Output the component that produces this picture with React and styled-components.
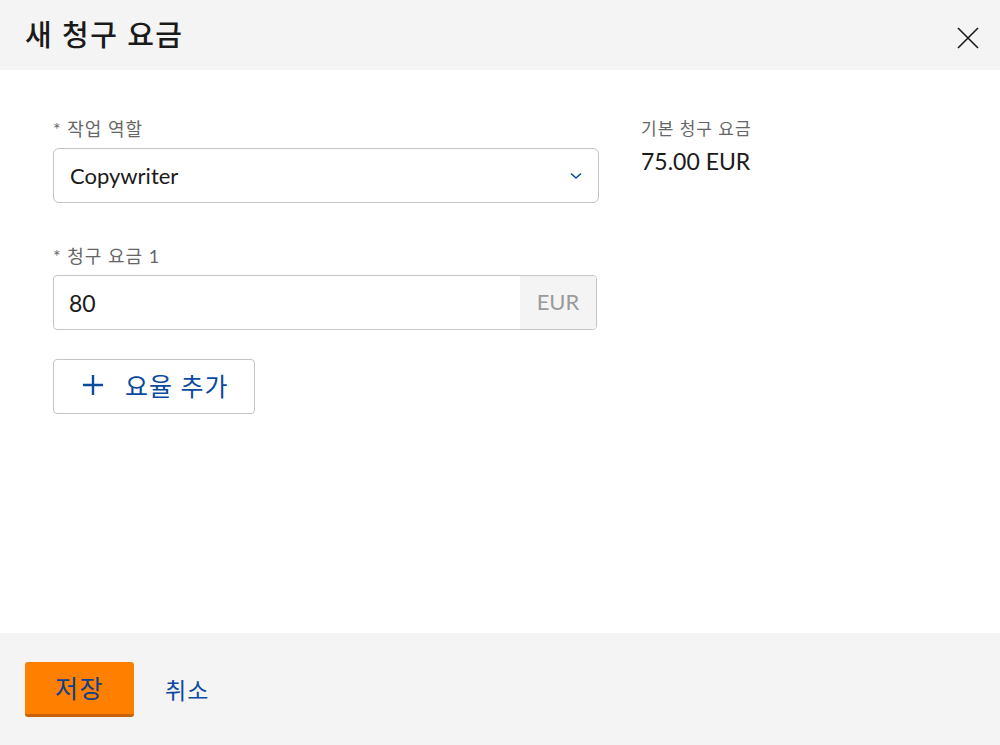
import React from "react";
import styled, { createGlobalStyle } from "styled-components";

const Global = createGlobalStyle`
  html, body { margin: 0; padding: 0; background: #fff; }
  body {
    font-family: Lato, "Noto Sans CJK KR", sans-serif;
    color: #1a1a1a;
  }
  * { box-sizing: border-box; }
`;

const Dialog = styled.div`
  width: 1000px;
  height: 745px;
  display: flex;
  flex-direction: column;
`;

const Header = styled.header`
  height: 70px;
  background: #f4f4f4;
  display: flex;
  align-items: center;
  justify-content: space-between;
  padding: 0 20px 0 25px;
`;

const Title = styled.h1`
  margin: 0 0 4px 0;
  font-size: 29px;
  font-weight: 500;
  color: #1a1a1a;
  letter-spacing: 1.5px;
`;

const CloseButton = styled.button`
  border: 0;
  background: none;
  padding: 0;
  width: 24px;
  height: 24px;
  display: flex;
  align-items: center;
  justify-content: center;
  cursor: pointer;
  margin-top: 6px;
`;

const Body = styled.main`
  flex: 1;
  background: #fff;
  display: flex;
  gap: 42px;
  padding: 48px 53px 0 53px;
`;

const FormColumn = styled.div`
  width: 546px;
  display: flex;
  flex-direction: column;
`;

const Field = styled.div`
  display: flex;
  flex-direction: column;
  margin-bottom: ${(p) => p.$mb || 0}px;
`;

const Label = styled.label`
  font-size: 18px;
  letter-spacing: 1px;
  color: #666;
  line-height: 22px;
  margin-bottom: 8px;
`;

const Select = styled.div`
  height: 55px;
  border: 1px solid #c4c4c4;
  border-radius: 6px;
  display: flex;
  align-items: center;
  justify-content: space-between;
  padding: 0 16px 0 16px;
  font-size: 22px;
  color: #1a1a1a;
`;

const InputGroup = styled.div`
  width: 544px;
  height: 55px;
  border: 1px solid #c4c4c4;
  border-radius: 4px;
  display: flex;
  overflow: hidden;
`;

const Input = styled.div`
  flex: 1;
  display: flex;
  align-items: center;
  padding-left: 15px;
  font-size: 23px;
`;

const Addon = styled.div`
  width: 76px;
  background: #f4f4f4;
  color: #9a9a9a;
  font-size: 22px;
  display: flex;
  align-items: center;
  justify-content: center;
  padding-bottom: 3px;
`;

const AddButton = styled.button`
  width: 202px;
  height: 55px;
  border: 1px solid #c4c4c4;
  border-radius: 4px;
  background: #fff;
  color: #0b4a9e;
  font-family: inherit;
  font-size: 25px;
  letter-spacing: 1px;
  display: flex;
  align-items: center;
  gap: 21px;
  padding: 0 0 3px 28px;
  cursor: pointer;
`;

const Info = styled.div`
  display: flex;
  flex-direction: column;
`;

const InfoLabel = styled.div`
  font-size: 17px;
  letter-spacing: 1px;
  color: #666;
  line-height: 22px;
`;

const InfoValue = styled.div`
  font-size: 23px;
  line-height: 26px;
  margin-top: 8px;
`;

const Footer = styled.footer`
  height: 112px;
  background: #f4f4f4;
  display: flex;
  align-items: flex-start;
  padding: 29px 25px 0 25px;
  gap: 31px;
`;

const SaveButton = styled.button`
  width: 109px;
  height: 55px;
  border: 0;
  border-bottom: 3px solid #c9620a;
  border-radius: 3px;
  background: #ff8000;
  color: #0b3f8f;
  font-family: inherit;
  font-size: 25px;
  letter-spacing: 1.5px;
  padding: 0 0 2px 0;
  cursor: pointer;
`;

const LinkButton = styled.button`
  border: 0;
  background: none;
  color: #0b4a9e;
  font-family: inherit;
  font-size: 23px;
  letter-spacing: 1px;
  height: 55px;
  padding: 0 0 2px 0;
  cursor: pointer;
`;

export default function App() {
  return (
    <Dialog>
      <Global />
      <Header>
        <Title>새 청구 요금</Title>
        <CloseButton aria-label="닫기">
          <svg width="22" height="22" viewBox="0 0 22 22">
            <path d="M1 1 L21 21 M21 1 L1 21" stroke="#1a1a1a" strokeWidth="1.6" />
          </svg>
        </CloseButton>
      </Header>
      <Body>
        <FormColumn>
          <Field $mb={42}>
            <Label>* 작업 역할</Label>
            <Select>
              <span>Copywriter</span>
              <svg width="12" height="8" viewBox="0 0 12 8">
                <path d="M1 1.5 L6 6 L11 1.5" fill="none" stroke="#0b4a9e" strokeWidth="1.6" />
              </svg>
            </Select>
          </Field>
          <Field $mb={29}>
            <Label>* 청구 요금 1</Label>
            <InputGroup>
              <Input>80</Input>
              <Addon>EUR</Addon>
            </InputGroup>
          </Field>
          <AddButton>
            <svg width="22" height="22" viewBox="0 0 22 22">
              <path d="M11 1 V21 M1 11 H21" stroke="#0b4a9e" strokeWidth="2.4" />
            </svg>
            <span>요율 추가</span>
          </AddButton>
        </FormColumn>
        <Info>
          <InfoLabel>기본 청구 요금</InfoLabel>
          <InfoValue>75.00 EUR</InfoValue>
        </Info>
      </Body>
      <Footer>
        <SaveButton>저장</SaveButton>
        <LinkButton>취소</LinkButton>
      </Footer>
    </Dialog>
  );
}
